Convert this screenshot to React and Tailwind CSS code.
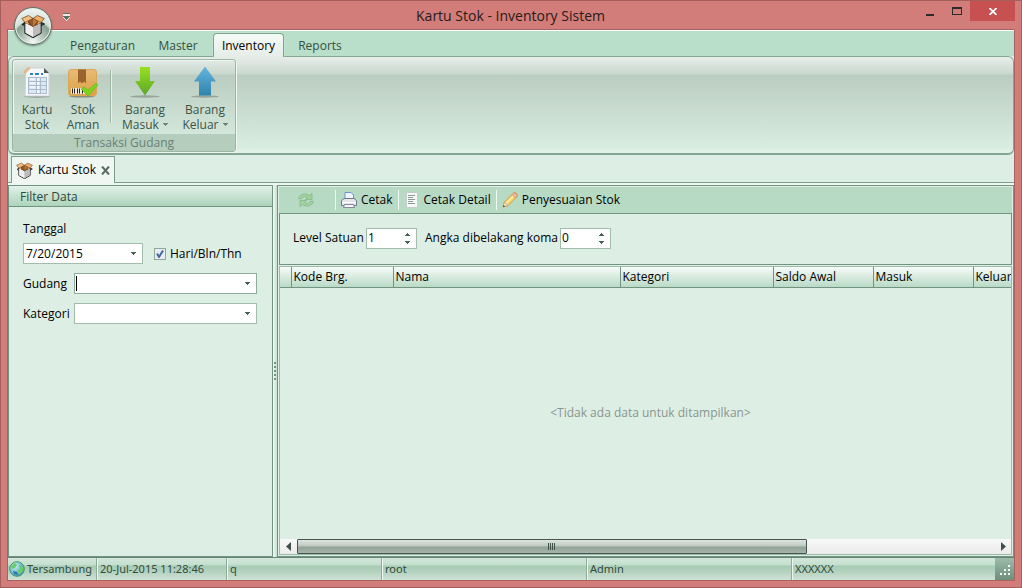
import React from "react";

const Caret = ({ up = false, color = "#476355", className = "" }) => (
  <svg width="5" height="3" viewBox="0 0 5 3" shapeRendering="crispEdges" className={className} aria-hidden="true">
    {up ? <path d="M2 0h1v1h1v1h1v1H0V2h1V1h1z" fill={color} /> : <path d="M0 0h5v1H4v1H3v1H2V2H1V1H0z" fill={color} />}
  </svg>
);

const BoxIcon = ({ size = 24 }) => (
  <svg width={size} height={size} viewBox="0 0 24 24" aria-hidden="true">
    <path d="M4 8.500V19l8 4.500 8-4.500V8.500L12 13z" fill="#d9d9d9" stroke="#1b1b1b" strokeWidth="1.300" strokeLinejoin="round" />
    <path d="M4.500 9 12 12.500V23l-7.500-4.200z" fill="#efefef" />
    <path d="M12 12.500 19.500 9v9.800L12 23z" fill="#bcbcbc" />
    <path d="M4 8.500 12 4.500l8 4L12 13z" fill="#7d4519" />
    <path d="M12 4.500 16.500 7 12 13z" fill="#b97b3d" />
    <path d="M12 4.500 7.500 7 12 13z" fill="#93582a" />
    <path d="M4 8.500.8 4.500 7.500 1.500 12 4.500z" fill="#f5bd80" stroke="#5e3714" strokeWidth=".7" strokeLinejoin="round" />
    <path d="M12 4.500 16.500 1.500l6.700 3L20 8.500z" fill="#f0ae6c" stroke="#5e3714" strokeWidth=".7" strokeLinejoin="round" />
    <path d="M4 8.500 1.500 10.500 3.500 11.500M20 8.500l3 1.500-3 1.500" fill="none" stroke="#1b1b1b" strokeWidth="1.200" />
    <path d="M4 8.500 6.500 7.300 8 10.500z" fill="#f3b878" />
    <path d="M20 8.500l-2.500-1.200L16 10.500z" fill="#e9a765" />
  </svg>
);

const SheetIcon = () => (
  <svg width="32" height="32" viewBox="0 0 32 32" aria-hidden="true">
    <ellipse cx="16" cy="30.500" rx="13" ry="1.200" fill="#8a9a90" />
    <path d="M5 2h18l5 5v23H4z" fill="#f7f7f9" stroke="#cfd2d6" />
    <path d="M23 2v5h5z" fill="#50565c" />
    <path d="M2 6l5-5 3 1-6 6z" fill="#dfb98a" />
    <path d="M9 7h3v2H9zM14 7h4v2h-4zM20 7h2v2h-2z" fill="#2986bd" />
    <path d="M7 11h9v17H7zM18 11h8v17h-8z" fill="#dce9f3" />
    <path d="M7 11.500h19M7 15.500h19M7 19.500h19M7 23.500h19M7 27.500h19M7.500 11v17M15.500 11v17M19.500 11v17M25.500 11v17" stroke="#a9bbcd" />
    <path d="M9 13h5M9 17h5M9 21h5" stroke="#fff" />
  </svg>
);

const ParcelIcon = () => (
  <svg width="32" height="32" viewBox="0 0 32 32" aria-hidden="true">
    <defs>
      <linearGradient id="parcel" x1="0" y1="0" x2="0" y2="1">
        <stop offset="0" stopColor="#e9bb78" />
        <stop offset="1" stopColor="#dba245" />
      </linearGradient>
    </defs>
    <ellipse cx="15" cy="30.600" rx="13" ry="1" fill="#8a8b78" />
    <rect x="1.500" y="3.500" width="28" height="26" rx="2.500" fill="url(#parcel)" stroke="#d9a65a" />
    <path d="M2 16h27" stroke="#dfa755" />
    <path d="M11 3.500h8v14l-2-2-2 2-2-2-2 2z" fill="#9a632d" />
    <rect x="4" y="22" width="14" height="6" fill="#f4ead9" />
    <path d="M5.500 22.500v5M7.500 22.500v5M10.500 22.500v5M12.500 22.500v5M15.500 22.500v5" stroke="#2b211a" />
    <path d="M14 23l3-2 4 3 8-7 2 2-10 11z" fill="#7ed321" stroke="#5eb41a" strokeWidth=".6" />
  </svg>
);

const DownIcon = () => (
  <svg width="32" height="32" viewBox="0 0 32 32" aria-hidden="true">
    <defs>
      <linearGradient id="down" x1="0" y1="0" x2="0" y2="1">
        <stop offset="0" stopColor="#98e01e" />
        <stop offset="1" stopColor="#5ba62b" />
      </linearGradient>
    </defs>
    <ellipse cx="16" cy="30.500" rx="15" ry="1.200" fill="#98a49b" />
    <path d="M11 1h10v14h5L16 29.500 6 15h5z" fill="url(#down)" />
  </svg>
);

const UpIcon = () => (
  <svg width="32" height="32" viewBox="0 0 32 32" aria-hidden="true">
    <defs>
      <linearGradient id="up" x1="0" y1="0" x2="0" y2="1">
        <stop offset="0" stopColor="#65b5e1" />
        <stop offset="1" stopColor="#3083aa" />
      </linearGradient>
    </defs>
    <ellipse cx="16" cy="30.500" rx="14" ry="1.200" fill="#98a49b" />
    <path d="M16 .5l11 15h-5v14H10v-14H5z" fill="url(#up)" />
  </svg>
);

const RefreshIcon = () => (
  <svg width="16" height="16" viewBox="0 0 16 16" aria-hidden="true">
    <path d="M.5 6.500C2 2 7.500.5 11.500 3.500L14 1.500V7.500H7.500L9.500 5.500C7 4 4.500 4.500 3.500 7z" fill="#a3d39c" stroke="#7bb581" strokeWidth=".7" />
    <path d="M15.500 9.500c-1.500 4.500-7 6-11 3L2 14.500v-6h6.500l-2 2c2.500 1.500 5 1 6-1.500z" fill="#a3d39c" stroke="#7bb581" strokeWidth=".7" />
  </svg>
);

const PrinterIcon = () => (
  <svg width="16" height="16" viewBox="0 0 16 16" aria-hidden="true">
    <path d="M4 8V.5h6L12.500 3v5z" fill="#eff6ff" stroke="#6c94d4" />
    <path d="M.5 8.500 3 6.500h10l2.500 2v5h-15z" fill="#e4e6ec" stroke="#73788c" />
    <path d="M1 10.500h14" stroke="#fff" />
    <path d="M3.500 12.500h9l1 3h-11z" fill="#f8f8fa" stroke="#85899c" />
  </svg>
);

const PageIcon = () => (
  <svg width="16" height="16" viewBox="0 0 16 16" aria-hidden="true">
    <path d="M2.500.5h11v15h-11z" fill="#f7f9f8" stroke="#c3cdc9" />
    <path d="M4 3.500h7M4 5.500h5M4 7.500h7M4 9.500h5M4 11.500h7" stroke="#8e9a98" />
  </svg>
);

const PencilIcon = () => (
  <svg width="16" height="16" viewBox="0 0 16 16" aria-hidden="true">
    <path d="M1 15l1.500-5L11 1.500q2-1.500 3.500 0t0 3.500L6 13.500z" fill="#fbd36c" stroke="#cc9340" strokeWidth=".9" />
    <path d="M4 11.500l8-8" stroke="#fff0b2" strokeWidth="1.500" />
    <path d="M11 1.500q2-1.500 3.500 0t0 3.500l-1 1L10 2.500z" fill="#efb79b" stroke="#c98c68" strokeWidth=".8" />
    <path d="M1 15l1.500-5L6 13.500z" fill="#f7e3c2" stroke="#c49a60" strokeWidth=".7" />
    <path d="M1 15l.6-2 1.500 1.400z" fill="#4b4034" />
  </svg>
);

const GlobeIcon = () => (
  <svg width="16" height="16" viewBox="0 0 16 16" aria-hidden="true" className="shrink-0">
    <defs>
      <radialGradient id="globe" cx=".35" cy=".3" r=".8">
        <stop offset="0" stopColor="#d4f0ee" />
        <stop offset=".6" stopColor="#6db8d4" />
        <stop offset="1" stopColor="#3d8bb4" />
      </radialGradient>
    </defs>
    <circle cx="8" cy="8" r="7.300" fill="url(#globe)" stroke="#3f9a62" />
    <path d="M2 5l4-3 2 2-2 3-3 1zM10 4l3 1 1.500 3-2 4-3 1-1-3 2-2z" fill="#66cf6a" />
    <path d="M4 10l4 1 1 3-4-1z" fill="#3273b4" />
  </svg>
);

function RibbonButton({ icon, lines, menu, width }) {
  return (
    <button type="button" className={"flex flex-col items-center pt-1.5 text-center leading-[15px] text-[#3a5447] " + width}>
      {icon}
      <span className="mt-1 block">{lines[0]}</span>
      <span className="flex items-center gap-1">
        {lines[1]}
        {menu && <Caret color="#6a8576" />}
      </span>
    </button>
  );
}

function Tool({ icon, label }) {
  return (
    <button type="button" aria-label={label ? undefined : "Segarkan"} className="flex items-center gap-1 text-black">
      {icon}
      {label}
    </button>
  );
}

const ToolSeparator = () => <span className="mx-[5px] h-5 w-px bg-[#f0f8f3]" />;

function Spinner({ id, value }) {
  return (
    <div className="flex h-[21px] w-[51px] border border-[#a2bdab] bg-white">
      <input id={id} type="number" defaultValue={value} className="w-0 min-w-0 flex-1 pl-px outline-none [appearance:textfield] [&::-webkit-inner-spin-button]:hidden" />
      <div className="flex w-[17px] flex-col items-center justify-between py-1">
        <button type="button" aria-label="Tambah"><Caret up className="block" /></button>
        <button type="button" aria-label="Kurangi"><Caret className="block" /></button>
      </div>
    </div>
  );
}

const tabs = [
  { name: "Pengaturan", width: "w-[81px]" },
  { name: "Master", width: "w-14" },
  { name: "Inventory", width: "w-[71px]", active: true },
  { name: "Reports", width: "w-[58px]" },
];

const columns = ["", "Kode Brg.", "Nama", "Kategori", "Saldo Awal", "Masuk", "Keluar"];
const widths = ["w-[11px]", "w-[102px]", "w-[227px]", "w-[153px]", "w-[100px]", "w-[100px]", "w-[100px]"];

export default function App() {
  return (
    <div className="relative flex h-screen flex-col overflow-hidden border border-[#a45f5d] bg-[#d27d79] px-1.5 pb-1.5 font-['Open_Sans','Noto_Sans',sans-serif] text-[12px] text-black">
      <header className="flex h-7 shrink-0 items-start">
        <button type="button" aria-label="Sesuaikan bilah akses cepat" className="mt-3 ml-[56px]">
          <svg width="7" height="8" viewBox="0 0 7 8" shapeRendering="crispEdges" className="block">
            <path d="M0 0h7v1H0zM0 3h7v1H6v1H5v1H4v1H3V6H2V5H1V4H0z" fill="#5c6f64" />
            <path d="M0 1h7v2H0zM0 4h1v1h1v1h1v1h1V6h1V5h1V4h1v1H6v1H5v1H4v1H3V7H2V6H1V5H0z" fill="#f4e9e7" />
          </svg>
        </button>
        <h1 className="flex-1 pt-1 pl-[34px] text-center text-[14px] leading-[22px] text-[#2a1a19]">Kartu Stok - Inventory Sistem</h1>
        <div className="-mr-1.5 flex">
          <button type="button" aria-label="Kecilkan" className="flex h-5 w-[26px] items-center justify-center pt-[7px]"><span className="h-0.5 w-2 bg-[#2b2b2b]" /></button>
          <button type="button" aria-label="Perbesar" className="flex h-5 w-[27px] items-center justify-center"><span className="h-2 w-2.5 border border-t-2 border-[#2b2b2b]" /></button>
          <button type="button" aria-label="Tutup" className="mr-1.5 flex h-5 w-[45px] items-center justify-center bg-[#c75050]">
            <svg width="8" height="7" viewBox="0 0 8 7"><path d="M.5 0l7 7M7.500 0l-7 7" stroke="#fff" strokeWidth="1.700" /></svg>
          </button>
        </div>
      </header>

      <button type="button" aria-label="Menu aplikasi" className="absolute top-1.5 left-[13px] z-20 flex size-[38px] items-center justify-center rounded-full border border-[#5d756a] bg-[radial-gradient(circle_at_50%_95%,#f5faf6_0%,#a5b9ac_35%,#87a091_52%,#d6e1da_58%,#fbfdfc_100%)] shadow-[inset_0_0_0_1px_#e9f1ec,0_1px_2px_#4449]">
        <BoxIcon size={24} />
      </button>

      <div className="flex min-h-0 flex-1 flex-col border border-[#a9625f] bg-[#ddefe4]">
        <nav role="tablist" className="flex h-[26px] shrink-0 items-end gap-[7px] border-t border-white bg-[#b9dec9] pl-[54px]">
          {tabs.map((t) => (
            <button
              key={t.name}
              type="button"
              role="tab"
              aria-selected={!!t.active}
              className={
                t.active
                  ? "relative z-10 -mb-px h-6 rounded-t border border-b-0 border-[#7da58c] bg-[linear-gradient(#f4faf6,#e6ece8)] text-black shadow-[0_0_0_1px_#d2eadb55] " + t.width
                  : "h-6 pt-[3px] text-[#34503f] " + t.width
              }
            >
              {t.name}
            </button>
          ))}
        </nav>

        <section className="flex h-[99px] shrink-0 rounded-md border border-b-2 border-[#84a791] bg-[linear-gradient(#e8edea_0px,#c9d8ce_17px,#bbcdc1_18px,#bed1c4_28px,#d9ece0_90px,#e3f2e8_96px)] p-0.5 pl-[3px]">
          <div className="flex h-[93px] flex-col overflow-hidden rounded-[3px] border border-[#9db5a5] shadow-[1px_1px_0_#edf6f0,inset_1px_1px_0_#edf6f0]">
            <div className="flex flex-1 items-start">
              <RibbonButton icon={<SheetIcon />} lines={["Kartu", "Stok"]} width="w-12" />
              <RibbonButton icon={<ParcelIcon />} lines={["Stok", "Aman"]} width="w-11" />
              <span className="mt-2.5 mr-[3px] ml-[5px] h-[53px] w-0.5 border-l border-[#9bb4a4] bg-[#e8f2ec]" />
              <RibbonButton icon={<DownIcon />} lines={["Barang", "Masuk"]} width="w-[60px]" menu />
              <RibbonButton icon={<UpIcon />} lines={["Barang", "Keluar"]} width="w-[60px]" menu />
            </div>
            <div className="h-[17px] bg-[#b4cdbc] text-center leading-[17px] text-[#6a8174]">Transaksi Gudang</div>
          </div>
        </section>

        <div className="flex h-7 shrink-0 items-end border-b border-[#7d9e8a] pl-[3px]">
          <div className="-mb-px flex h-[27px] w-[104px] items-center gap-[5px] border border-b-0 border-[#7d9e8a] bg-[#f0f7f3] pl-1">
            <BoxIcon size={17} />
            <span className="whitespace-nowrap">Kartu Stok</span>
            <button type="button" aria-label="Tutup tab">
              <svg width="9" height="9" viewBox="0 0 9 9" className="block"><path d="M1 .5l7 8M8 .5l-7 8" stroke="#596b61" strokeWidth="2" /></svg>
            </button>
          </div>
        </div>

        <main className="flex min-h-0 flex-1 bg-[#eef7f1] pt-0.5">
          <aside className="flex w-[265px] shrink-0 flex-col border border-[#71937f] bg-[#ddefe4]">
            <h2 className="h-[21px] border-b border-[#71937f] bg-[linear-gradient(#e2f1e8,#acd4bb)] pl-[11px] leading-[21px] text-[#2f4739]">Filter Data</h2>
            <form className="flex flex-col pt-[13px] pl-3.5">
              <label htmlFor="tanggal" className="leading-[18px]">Tanggal</label>
              <div className="mt-[5px] flex h-[21px] items-center">
                <div className="flex h-[21px] w-[120px] items-center border border-[#a2bdab] bg-white pr-1.5">
                  <input id="tanggal" type="text" defaultValue="7/20/2015" className="w-0 min-w-0 flex-1 pl-0.5 outline-none" />
                  <button type="button" aria-label="Pilih tanggal" className="flex"><Caret /></button>
                </div>
                <label className="ml-[11px] flex items-center gap-1">
                  <input type="checkbox" defaultChecked className="size-3 appearance-none border border-[#8fa698] bg-[#e8edf3]" />
                  <svg width="8" height="8" viewBox="0 0 8 8" className="pointer-events-none -ml-3.5" aria-hidden="true"><path d="M1 3.500 3 7 7 .5" fill="none" stroke="#48669d" strokeWidth="2" /></svg>
                  <span className="pl-0.5">Hari/Bln/Thn</span>
                </label>
              </div>
              <div className="mt-[9px] flex h-[21px] items-center">
                <label htmlFor="gudang" className="w-[51px]">Gudang</label>
                <div className="flex h-[21px] w-[183px] items-center border border-[#8fac9a] bg-white pr-1.5 pl-px">
                  <span className="h-[15px] w-px bg-black" />
                  <input id="gudang" type="text" role="combobox" aria-expanded="false" className="w-0 min-w-0 flex-1 outline-none" />
                  <button type="button" aria-label="Pilih gudang" className="flex"><Caret /></button>
                </div>
              </div>
              <div className="mt-[9px] flex h-[21px] items-center">
                <label htmlFor="kategori" className="w-[51px]">Kategori</label>
                <div className="flex h-[21px] w-[183px] items-center border border-[#a2bdab] bg-white pr-1.5">
                  <select id="kategori" className="w-0 min-w-0 flex-1 appearance-none outline-none"><option></option></select>
                  <Caret />
                </div>
              </div>
            </form>
          </aside>

          <div className="flex w-1 shrink-0 flex-col items-center justify-center gap-0.5 bg-[linear-gradient(90deg,#f4faf6,#c5ddce)]">
            {[0, 1, 2, 3, 4].map((n) => <span key={n} className="size-0.5 shrink-0 bg-[#71937f]" />)}
          </div>

          <section className="flex min-w-0 flex-1 flex-col border border-[#71937f] bg-[#ddefe4] px-px pt-px pb-px">
            <div role="toolbar" className="flex h-[26px] shrink-0 items-center bg-[#b7dac5] pl-[19px]">
              <Tool icon={<RefreshIcon />} />
              <span className="w-4" />
              <ToolSeparator />
              <Tool icon={<PrinterIcon />} label="Cetak" />
              <ToolSeparator />
              <Tool icon={<PageIcon />} label="Cetak Detail" />
              <ToolSeparator />
              <Tool icon={<PencilIcon />} label="Penyesuaian Stok" />
            </div>
            <div className="flex h-[52px] shrink-0 items-center border border-[#71937f] pb-0.5 pl-[13px]">
              <label htmlFor="level" className="w-[73px]">Level Satuan</label>
              <Spinner id="level" value={1} />
              <label htmlFor="koma" className="ml-2 w-[135px]">Angka dibelakang koma</label>
              <Spinner id="koma" value={0} />
            </div>
            <div className="mt-px flex min-h-0 flex-1 flex-col border border-[#9dbbaa]">
              <div className="overflow-hidden">
                <table className="w-full min-w-[793px] table-fixed border-collapse">
                  <thead>
                    <tr className="h-5 bg-[linear-gradient(#f7fbf8,#b9dac6)]">
                      {columns.map((c, i) => (
                        <th key={i} scope="col" className={"border-r border-b border-[#71937f] p-0 pl-0.5 text-left leading-[19px] font-normal whitespace-nowrap " + widths[i]}>{c}</th>
                      ))}
                    </tr>
                  </thead>
                </table>
              </div>
              <div className="flex flex-1 items-center justify-center pl-2.5 text-[#8a958f]">&lt;Tidak ada data untuk ditampilkan&gt;</div>
              <div className="flex h-[15px] shrink-0 items-center bg-[linear-gradient(#f8f8f8,#ebebeb)]">
                <button type="button" aria-label="Gulir ke kiri" className="flex w-[17px] shrink-0 justify-center">
                  <svg width="5" height="9" viewBox="0 0 5 9"><path d="M5 0v9L0 4.500z" fill="#3f5148" /></svg>
                </button>
                <div className="flex h-full min-w-0 flex-1">
                  <div className="flex w-[73%] items-center justify-center gap-px rounded-[1px] border border-[#47554d] bg-[linear-gradient(#dde4df_0%,#bdc8c1_48%,#91a297_52%,#a5b4aa_100%)]">
                    {[0, 1, 2, 3].map((n) => <span key={n} className="h-[7px] w-px bg-[#3f5148]" />)}
                  </div>
                </div>
                <button type="button" aria-label="Gulir ke kanan" className="flex w-4 shrink-0 justify-center">
                  <svg width="5" height="9" viewBox="0 0 5 9"><path d="M0 0v9l5-4.500z" fill="#3f5148" /></svg>
                </button>
              </div>
            </div>
          </section>
        </main>

        <footer className="flex h-[23px] shrink-0 border-t border-[#668674] bg-[linear-gradient(#d3e7db_0%,#c4dfce_32%,#a6cbb4_36%,#b5d3c0_65%,#cfe2d6_100%)] font-['Noto_Sans',sans-serif] text-[11px] text-[#324b3e]">
          <div className="flex w-[89px] items-center gap-0.5 border-r border-[#8dac99] pl-px"><GlobeIcon />Tersambung</div>
          <div className="flex w-[130px] items-center border-r border-l border-[#8dac99] border-l-[#eef6f1] pl-0.5">20-Jul-2015 11:28:46</div>
          <div className="flex w-[155px] items-center border-r border-l border-[#8dac99] border-l-[#eef6f1] pl-0.5">q</div>
          <div className="flex w-[205px] items-center border-r border-l border-[#8dac99] border-l-[#eef6f1] pl-0.5">root</div>
          <div className="flex w-[205px] items-center border-r border-l border-[#8dac99] border-l-[#eef6f1] pl-0.5">Admin</div>
          <div className="flex flex-1 items-center border-l border-[#eef6f1] pl-0.5">XXXXXX</div>
          <div className="flex w-[19px] items-end justify-center bg-[linear-gradient(#9dbba9,#6d8f7c)] pb-1">
            <svg width="12" height="12" viewBox="0 0 12 12" shapeRendering="crispEdges" aria-hidden="true">
              <path d="M9 1h2v2H9zM5 5h2v2H5zM9 5h2v2H9zM1 9h2v2H1zM5 9h2v2H5zM9 9h2v2H9z" fill="#f3faf6" />
            </svg>
          </div>
        </footer>
      </div>
    </div>
  );
}
